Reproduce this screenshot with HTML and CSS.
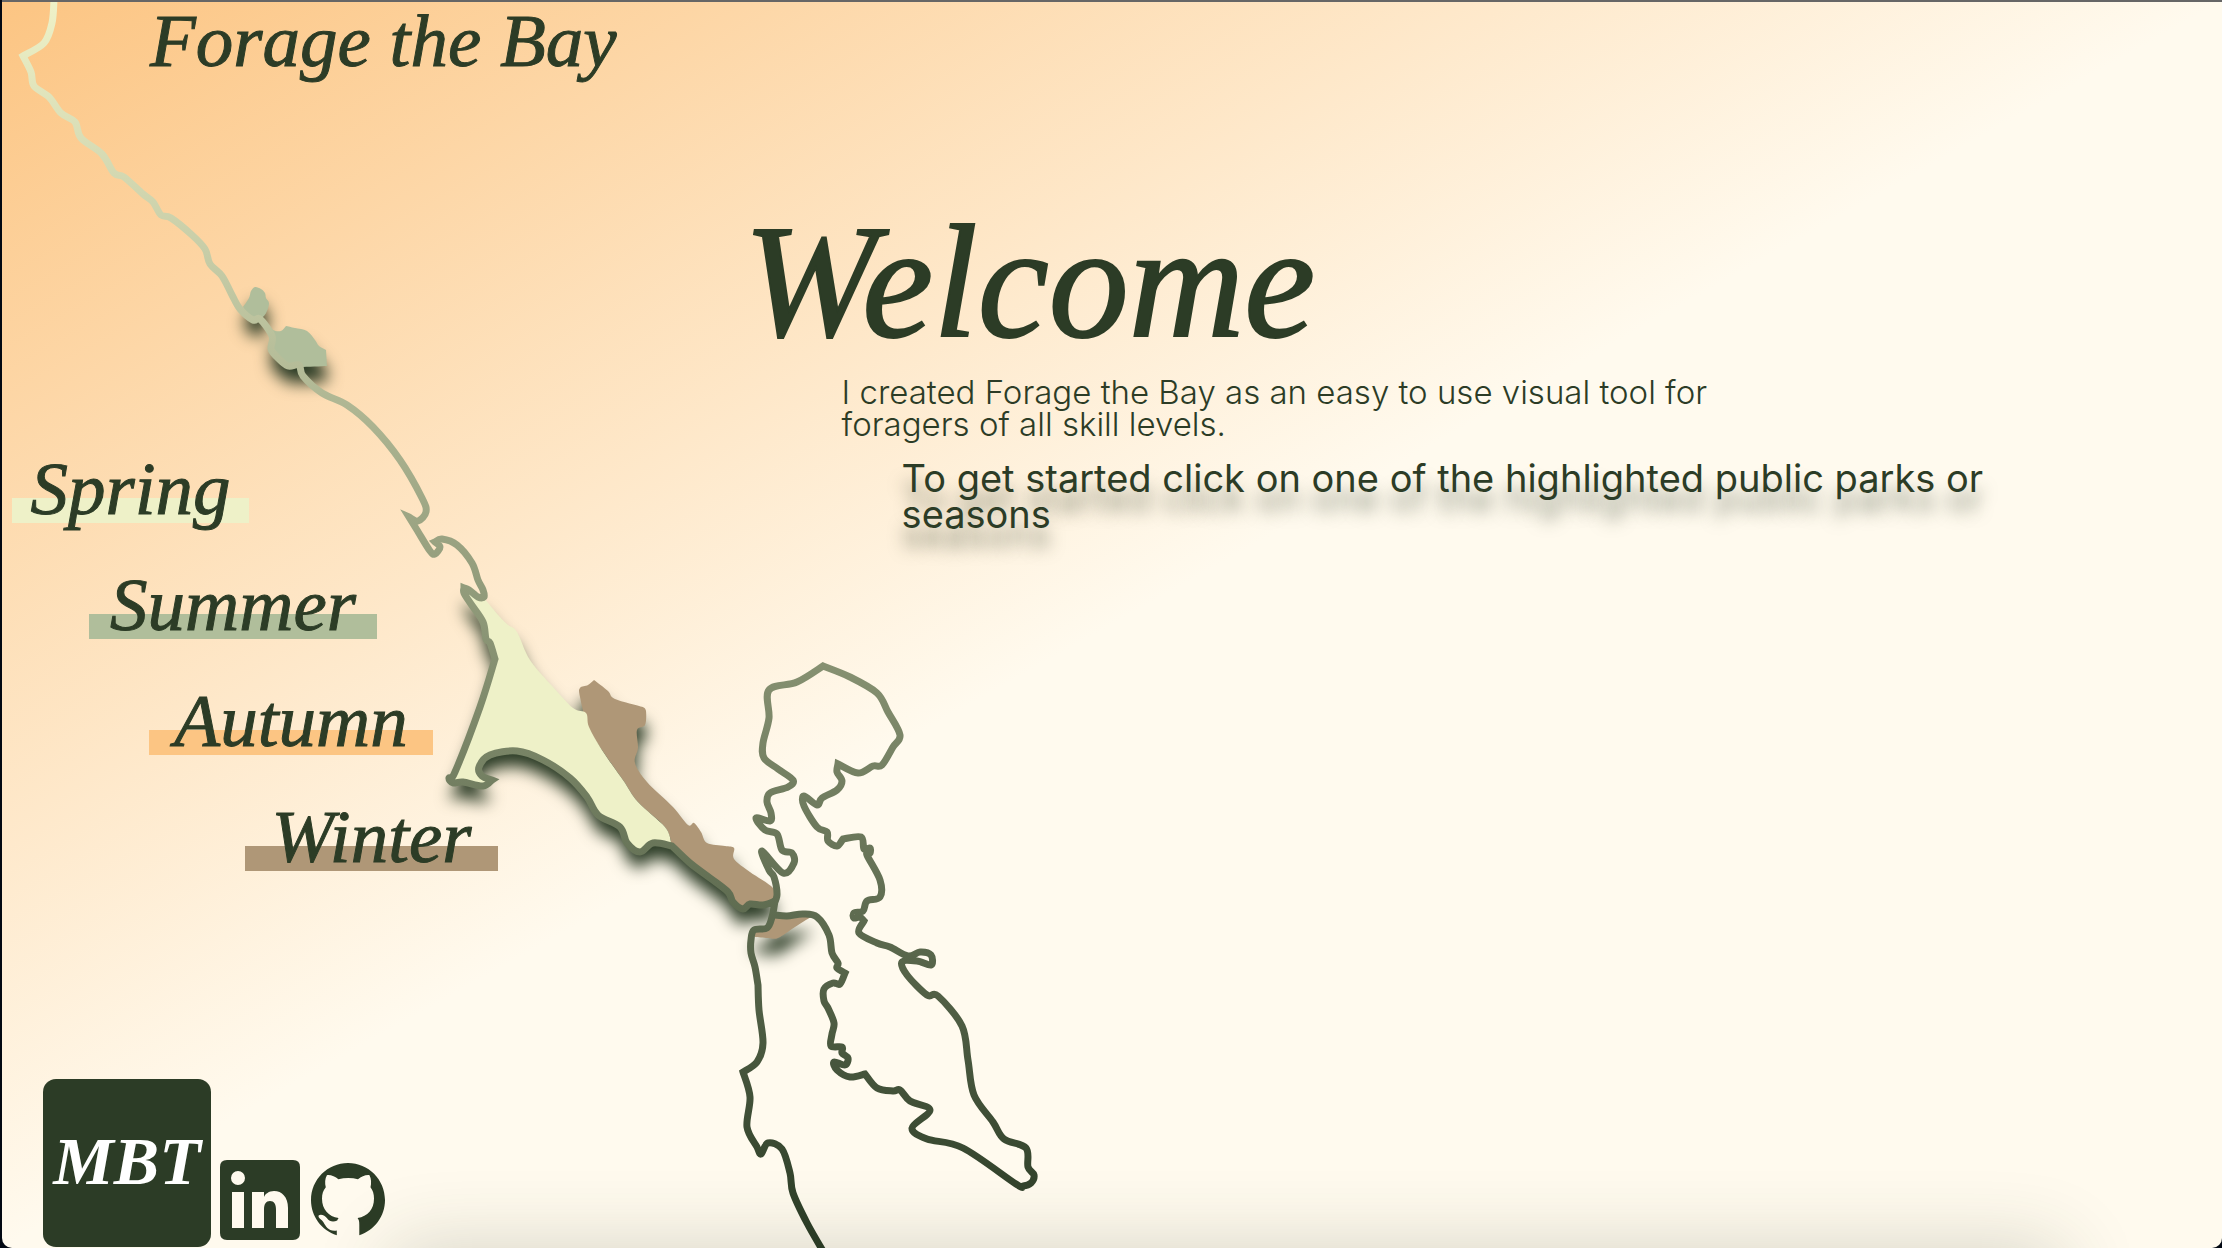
FILE: index.html
```html
<!DOCTYPE html>
<html lang="en">
<head>
<meta charset="utf-8">
<title>Forage the Bay</title>
<link rel="stylesheet" href="styles.css">
</head>
<body>
<div class="page">
  <svg class="map" viewBox="0 0 1060 1246" preserveAspectRatio="xMinYMin meet" role="img" aria-label="Map of the Bay Area coast">
    <defs>
      <linearGradient id="coast-fade" gradientUnits="userSpaceOnUse" x1="0" y1="0" x2="0" y2="1246">
        <stop offset="0" stop-color="#eff2c8"/>
        <stop offset="1" stop-color="#2a3b25"/>
      </linearGradient>
    </defs>
    <g class="parks" transform="translate(-2 -2)">
      <path class="park park-winter" id="park-headlands"/>
      <path class="park park-winter" id="park-presidio"/>
      <path class="park park-spring" id="park-reyes"/>
      <path class="park park-summer" id="park-salt-point"/>
      <path class="park park-summer" id="park-fort-ross"/>
    </g>
    <g class="coast" transform="translate(-2 -2)">
      <path id="coast-line"/>
      <path id="bay-line"/>
    </g>
  </svg>

  <header class="site-header"><h1 class="site-title">Forage the Bay</h1></header>

  <main class="content">
    <section class="welcome">
      <h2 class="welcome-title">Welcome</h2>
      <p class="intro">I created Forage the Bay as an easy to use visual tool for foragers of all skill levels.</p>
      <p class="hint">To get started click on one of the highlighted public parks or seasons</p>
    </section>
    <nav class="seasons" aria-label="Seasons">
      <a class="season spring" href="#spring">Spring</a>
      <a class="season summer" href="#summer">Summer</a>
      <a class="season autumn" href="#autumn">Autumn</a>
      <a class="season winter" href="#winter">Winter</a>
    </nav>
  </main>

  <footer class="links">
    <a class="mbt" href="#portfolio">MBT</a>
    <a class="icon-link" href="#linkedin" aria-label="LinkedIn">
      <svg width="80" height="80" viewBox="0 0 80 80"><path fill="#2c3c26" fill-rule="evenodd" d="M7 0H73Q80 0 80 7V73Q80 80 73 80H7Q0 80 0 73V7Q0 0 7 0ZM18 11A7 7 0 1 0 18 25A7 7 0 1 0 18 11ZM12 32V68H24V32ZM32 32V68H44V49C44 44 46 41 50 41C54 41 56 44 56 50V68H68V48C68 37 62 31 54 31C49 31 45 34 44 37V32Z"/></svg>
    </a>
    <a class="icon-link" href="#github" aria-label="GitHub">
      <svg width="78" height="74" viewBox="-2 0 78 74"><path fill="#2c3c26" d="M37 0C16.600 0 0 16.600 0 37C0 53.400 10.600 67.300 25.800 72.300V67.500C17.500 68.700 15 63.600 12.600 59.500C10.500 56.300 6.900 55.200 7.600 52.600C9.500 50.300 14.300 52.500 16 55.300C18.500 58.800 22.500 59.200 26.200 57.500C26.500 56.600 27 55.800 27.600 55.100C17.500 53.500 11 46.500 11 35.500C11 31 12.200 27.300 14.800 24.300C13.700 20.500 13.900 15.300 15.900 12.200C19.800 11.600 24.200 14 27.400 16.200C33.600 14.700 41 14.700 47 16.200C50.300 14 54.600 11.600 58.500 12.200C60.300 15.300 60.500 20.500 59.500 24.300C61.900 27.300 63 31 63 35.500C63 46.500 56.700 53.200 46.600 55.100C48 57 48.300 58.500 48.300 62V72.300C63.400 67.300 74 53.400 74 37C74 16.600 57.400 0 37 0Z"/></svg>
    </a>
  </footer>
  <div class="drawer" aria-hidden="true"></div>
</div>
<script src="map.js"></script>
</body>
</html>
```

FILE: styles.css
```css
* {
  box-sizing: border-box;
}

body {
  margin: 0;
  background: #020812;
  color: #2c3c26;
  font-family: Inter, "Open Sans", sans-serif;
}

.page {
  position: relative;
  display: flex;
  flex-direction: column;
  min-height: 100vh;
  margin-left: 2px;
  overflow: hidden;
  border-top: 2px solid #666;
  border-radius: 0 0 10px 10px;
  background: linear-gradient(to bottom right, #fcc583, #fffaee 50%);
}

.map {
  position: absolute;
  top: 0;
  left: 0;
  height: 100%;
}

.parks {
  filter: drop-shadow(0 16px 8px #2c3c26);
}

.park-spring { fill: #eef1c8; }
.park-summer { fill: #b0be9b; }
.park-winter { fill: #af9777; }

.coast {
  fill: none;
  stroke: url(#coast-fade);
  stroke-width: 7;
  stroke-linejoin: miter;
}

.site-header,
.content,
.links {
  position: relative;
}

.site-title,
.welcome-title,
.season {
  margin: 0;
  font-family: "Liberation Serif", "Times New Roman", serif;
  font-style: italic;
  font-weight: 400;
  -webkit-text-stroke: 1px #2c3c26;
}

.site-title {
  padding-left: 148px;
  font-size: 75px;
  line-height: 78px;
}

.content {
  flex: 1;
}

.welcome {
  max-width: 66%;
  margin-left: 33%;
  padding-top: 118px;
}

.welcome-title {
  padding-left: 9px;
  font-size: 160px;
  line-height: 168px;
  -webkit-text-stroke-width: 2px;
}

.intro,
.hint {
  margin: 0;
}

.intro {
  max-width: 1030px;
  margin-top: 10px;
  padding-left: 107px;
  font-size: 33px;
  font-weight: 300;
  line-height: 32px;
}

.hint {
  max-width: 1270px;
  margin-top: 20px;
  padding-left: 167px;
  font-size: 38px;
  font-weight: 400;
  line-height: 36px;
  text-shadow: 0 20px 16px rgba(44, 60, 38, 0.5);
}

.seasons {
  position: absolute;
  top: 369px;
  left: 10px;
  display: flex;
  flex-direction: column;
  align-items: flex-start;
  gap: 36px;
}

.season {
  padding: 0 18px;
  background-repeat: no-repeat;
  background-position: 0 49px;
  background-size: 100% 25px;
  color: inherit;
  font-size: 75px;
  line-height: 80px;
  text-align: center;
  text-decoration: none;
}

.spring {
  width: 237px;
  background-image: linear-gradient(#eef1c8, #eef1c8);
}

.summer {
  width: 288px;
  margin-left: 77px;
  background-image: linear-gradient(#b0be9b, #b0be9b);
}

.autumn {
  width: 284px;
  margin-left: 137px;
  background-image: linear-gradient(#fcc583, #fcc583);
}

.winter {
  width: 253px;
  margin-left: 233px;
  background-image: linear-gradient(#af9777, #af9777);
}

.links {
  display: flex;
  align-items: flex-end;
  gap: 9px;
  padding: 0 0 1px 41px;
}

.mbt {
  width: 168px;
  padding-bottom: 4px;
  border-radius: 13px;
  background: #2c3c26;
  color: #fff;
  font: italic 700 68px/164px "Liberation Serif", serif;
  text-align: center;
  text-decoration: none;
}

.icon-link {
  display: flex;
  align-items: center;
  height: 80px;
  margin-bottom: 7px;
}

.drawer {
  position: absolute;
  top: 100%;
  right: 160px;
  left: 390px;
  height: 100px;
  box-shadow: 0 0 80px rgba(44, 60, 38, 0.2);
}
```

FILE: map.js
```js
// Each shape is a list of runs; points in a run are joined by a smooth curve,
// and neighbouring runs meet at a sharp corner.
const northCoast = [
  [[54,0],[52,23],[44,43],[23,56]],
  [[23,56],[31,72],[34,86],[49,97],[61,113],[75,122],[81,138],[102,154],[114,173],[124,177],[143,194],[153,202],[161,215],[171,218],[192,235],[205,249],[210,264],[222,276],[232,295],[240,309],[253,320],[260,319],[272,336],[271,349],[277,357],[288,366],[299,365],[303,376],[322,393],[347,405],[373,427],[400,460],[422,498],[426,512],[418,521],[409,517]],
  [[409,517],[417,530],[430,551],[435,554],[440,547],[435,542]],
  [[435,542],[442,539],[457,545],[472,563],[478,580],[483,590],[484,597],[478,597],[469,590],[464,588]]
];
const reyesWest = [
  [[464,588],[464,593],[471,604],[483,622],[486,639],[490,643],[495,659]],
  [[495,659],[480,707],[455,772],[449,778],[453,783],[463,782],[483,786],[492,780]],
  [[492,780],[482,776],[479,767],[490,755],[517,751],[543,760],[570,778],[587,797],[598,815],[620,827],[627,843],[640,852],[653,843],[672,846]]
];
const headlandsShore = [
  [[672,846],[690,863],[710,878],[728,892],[733,902],[743,909],[750,904],[763,905],[775,901]]
];
const southCoast = [
  [[775,901],[772,917],[767,928],[754,930],[751,940],[751,953],[755,967],[758,985]],
  [[758,985],[759,1010],[763,1043],[757,1062],[743,1072]],
  [[743,1072],[750,1097],[747,1127],[757,1147],[761,1154],[768,1143],[782,1149],[790,1173],[793,1193],[807,1223],[823,1251]]
];
const bay = [
  [[773,905],[777,895],[774,877],[769,870],[762,851],[783,873],[794,863],[792,853],[782,850],[777,834],[765,830],[756,818],[770,821],[771,813],[767,802],[770,793],[788,787],[793,780],[778,769],[764,758],[763,743],[769,718],[769,690],[797,682],[823,666]],
  [[823,666],[850,677],[877,693],[888,712],[900,735],[893,747],[882,765],[873,766],[858,773],[838,764]],
  [[838,764],[837,772],[842,781],[837,790],[822,798],[817,805],[804,796],[804,806],[817,827],[827,832],[828,841],[837,846],[843,839]],
  [[843,839],[861,837],[864,849],[870,848],[870,853],[867,855],[880,880],[880,897],[867,901],[863,911],[854,913],[854,918],[860,917],[864,921]],
  [[864,921],[859,933],[877,943],[890,947],[908,956],[920,952],[931,955],[931,965],[917,961],[902,962],[907,975],[927,995],[938,996],[962,1026],[968,1060],[974,1095],[993,1122],[1004,1139],[1026,1148],[1028,1167],[1034,1175],[1031,1183],[1023,1186],[1016,1184],[963,1148],[927,1139],[912,1128],[930,1110],[910,1101],[900,1090],[893,1091],[877,1088],[865,1074]],
  [[865,1074],[850,1077],[837,1070],[834,1062],[845,1065],[848,1058],[842,1053],[842,1047],[831,1046],[832,1034],[834,1023],[828,1008],[824,1001],[824,989],[833,983],[840,984],[845,973]],
  [[845,973],[837,968],[838,963],[832,953],[829,935],[817,917],[803,914],[787,916],[775,915]]
];
const reyesEast = [
  [[671,842],[665,827],[638,802],[623,780],[602,750],[589,727],[586,713],[573,708],[553,687],[530,660],[517,632],[508,625],[499,616],[484,598]]
];
const headlands = [
  [[775,901],[773,888],[750,872],[734,859],[734,848],[725,846],[707,843],[701,832],[694,823],[688,825],[673,807],[647,782],[635,763],[638,748],[637,730],[645,725],[646,711],[643,707]],
  [[643,707],[615,699],[608,691],[594,680]],
  [[594,680],[588,685],[580,688],[580,697],[588,727],[602,750],[623,780],[638,802],[665,827],[672,846]]
];
const presidio = [
  [[814,915],[795,927],[778,938],[768,938],[755,937]],
  [[755,937],[754,930],[767,928],[772,917]]
];
const saltPoint = [
  [[243,307],[249,298],[251,291],[255,287],[261,289],[265,293],[266,298],[269,304],[264,316],[253,320],[243,307]]
];
const fortRoss = [
  [[265,322],[273,330],[281,331],[286,326]],
  [[286,326],[295,328],[307,331],[315,340],[319,346],[326,350]],
  [[326,350],[327,366]],
  [[327,366],[300,367],[288,366],[277,357],[271,349],[272,336],[265,322]]
];

function smooth(runs) {
  let d = "M" + runs[0][0].join(" ");
  for (const run of runs) {
    for (let i = 0; i < run.length - 1; i++) {
      const before = run[i - 1] || run[i];
      const from = run[i];
      const to = run[i + 1];
      const after = run[i + 2] || to;
      const c1 = [0, 1].map(k => from[k] + (to[k] - before[k]) / 6);
      const c2 = [0, 1].map(k => to[k] - (after[k] - from[k]) / 6);
      d += "C" + [c1, c2, to].map(p => p.join(" ")).join(" ");
    }
  }
  return d;
}

function draw(id, runs, close) {
  document.getElementById(id).setAttribute("d", smooth(runs) + (close ? "Z" : ""));
}

draw("coast-line", [...northCoast, ...reyesWest, ...headlandsShore, ...southCoast]);
draw("bay-line", bay);
draw("park-reyes", [...reyesWest, ...reyesEast], true);
draw("park-headlands", [...headlandsShore, ...headlands], true);
draw("park-presidio", presidio, true);
draw("park-salt-point", saltPoint, true);
draw("park-fort-ross", fortRoss, true);
```
